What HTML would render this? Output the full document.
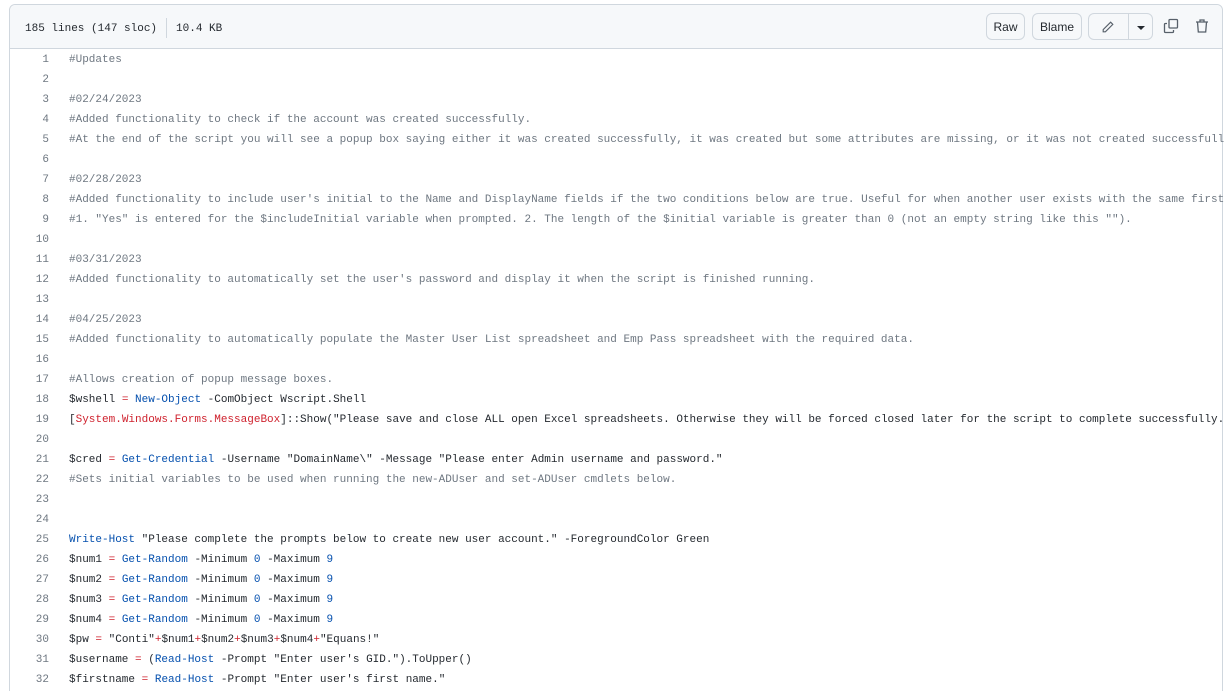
<!DOCTYPE html>
<html style="height:691px;overflow:hidden"><head><meta charset="utf-8"><style>
body{margin:0;background:#fff;width:1232px;height:691px;overflow:hidden;position:relative;font-family:"Liberation Sans",sans-serif;}
.box{position:absolute;left:9px;top:4px;width:1212px;height:700px;border:1px solid #d0d7de;border-radius:6px;}
.hdr{height:43px;background:#f6f8fa;border-bottom:1px solid #d0d7de;border-radius:6px 6px 0 0;position:relative;}
.info{position:absolute;left:15px;top:13px;font:11px "Liberation Mono",monospace;color:#24292f;}
.sep{display:inline-block;width:1px;height:20px;background:#d0d7de;vertical-align:middle;margin:0 9px;}
.btn{position:absolute;top:8px;height:27px;border:1px solid #d0d7de;border-radius:6px;background:#f6f8fa;font-size:12px;color:#24292f;line-height:27px;text-align:center;box-sizing:border-box;}
.code{position:absolute;left:0;top:50px;font:11px "Liberation Mono",monospace;color:#24292f;}
.l{height:20px;line-height:20px;white-space:pre;position:relative;}
.n{position:absolute;left:0;width:49px;text-align:right;color:#6e7781;}
.t{position:absolute;left:69px;}
.c{color:#6e7781}.f{color:#0550ae}.o{color:#cf222e}
</style></head><body>
<div class="box"><div class="hdr">
<div class="info">185 lines (147 sloc)<span class="sep"></span>10.4 KB</div>
<div class="btn" style="left:976px;width:39px">Raw</div>
<div class="btn" style="left:1022px;width:50px">Blame</div>
<div class="btn" style="left:1078px;width:65px"><svg style="position:absolute;left:12px;top:6px" width="14" height="14" viewBox="0 0 16 16" fill="none" stroke="#57606a" stroke-width="1.3"><path d="M11 2.5l2.5 2.5L5 13.5H2.5V11z"/></svg><span style="position:absolute;left:39px;top:0;width:1px;height:25px;background:#d0d7de"></span><span style="position:absolute;left:48px;top:12px;border:4px solid transparent;border-top:4px solid #24292f;border-bottom:0"></span></div>
<svg style="position:absolute;left:1153px;top:13px" width="16" height="16" viewBox="0 0 16 16" fill="none" stroke="#57606a" stroke-width="1.3"><rect x="6" y="1.5" width="8.5" height="8.5" rx="1"/><path d="M4 5.5H2.5a1 1 0 0 0-1 1v7a1 1 0 0 0 1 1h7a1 1 0 0 0 1-1V12"/></svg>
<svg style="position:absolute;left:1184px;top:13px" width="16" height="16" viewBox="0 0 16 16" fill="none" stroke="#57606a" stroke-width="1.3"><path d="M2 4h12M6 4V2h4v2M3.5 4l.8 10h7.4l.8-10"/></svg>
</div></div>
<div class="code">
<div class="l"><span class="n">1</span><span class="t c">#Updates</span></div>
<div class="l"><span class="n">2</span></div>
<div class="l"><span class="n">3</span><span class="t c">#02/24/2023</span></div>
<div class="l"><span class="n">4</span><span class="t c">#Added functionality to check if the account was created successfully.</span></div>
<div class="l"><span class="n">5</span><span class="t c">#At the end of the script you will see a popup box saying either it was created successfully, it was created but some attributes are missing, or it was not created successfull</span></div>
<div class="l"><span class="n">6</span></div>
<div class="l"><span class="n">7</span><span class="t c">#02/28/2023</span></div>
<div class="l"><span class="n">8</span><span class="t c">#Added functionality to include user's initial to the Name and DisplayName fields if the two conditions below are true. Useful for when another user exists with the same first</span></div>
<div class="l"><span class="n">9</span><span class="t c">#1. "Yes" is entered for the $includeInitial variable when prompted. 2. The length of the $initial variable is greater than 0 (not an empty string like this "").</span></div>
<div class="l"><span class="n">10</span></div>
<div class="l"><span class="n">11</span><span class="t c">#03/31/2023</span></div>
<div class="l"><span class="n">12</span><span class="t c">#Added functionality to automatically set the user's password and display it when the script is finished running.</span></div>
<div class="l"><span class="n">13</span></div>
<div class="l"><span class="n">14</span><span class="t c">#04/25/2023</span></div>
<div class="l"><span class="n">15</span><span class="t c">#Added functionality to automatically populate the Master User List spreadsheet and Emp Pass spreadsheet with the required data.</span></div>
<div class="l"><span class="n">16</span></div>
<div class="l"><span class="n">17</span><span class="t c">#Allows creation of popup message boxes.</span></div>
<div class="l"><span class="n">18</span><span class="t">$wshell <span class="o">=</span> <span class="f">New-Object</span> -ComObject Wscript.Shell</span></div>
<div class="l"><span class="n">19</span><span class="t">[<span class="o">System.Windows.Forms.MessageBox</span>]::Show("Please save and close ALL open Excel spreadsheets. Otherwise they will be forced closed later for the script to complete successfully.</span></div>
<div class="l"><span class="n">20</span></div>
<div class="l"><span class="n">21</span><span class="t">$cred <span class="o">=</span> <span class="f">Get-Credential</span> -Username "DomainName\" -Message "Please enter Admin username and password."</span></div>
<div class="l"><span class="n">22</span><span class="t c">#Sets initial variables to be used when running the new-ADUser and set-ADUser cmdlets below.</span></div>
<div class="l"><span class="n">23</span></div>
<div class="l"><span class="n">24</span></div>
<div class="l"><span class="n">25</span><span class="t"><span class="f">Write-Host</span> "Please complete the prompts below to create new user account." -ForegroundColor Green</span></div>
<div class="l"><span class="n">26</span><span class="t">$num1 <span class="o">=</span> <span class="f">Get-Random</span> -Minimum <span class="f">0</span> -Maximum <span class="f">9</span></span></div>
<div class="l"><span class="n">27</span><span class="t">$num2 <span class="o">=</span> <span class="f">Get-Random</span> -Minimum <span class="f">0</span> -Maximum <span class="f">9</span></span></div>
<div class="l"><span class="n">28</span><span class="t">$num3 <span class="o">=</span> <span class="f">Get-Random</span> -Minimum <span class="f">0</span> -Maximum <span class="f">9</span></span></div>
<div class="l"><span class="n">29</span><span class="t">$num4 <span class="o">=</span> <span class="f">Get-Random</span> -Minimum <span class="f">0</span> -Maximum <span class="f">9</span></span></div>
<div class="l"><span class="n">30</span><span class="t">$pw <span class="o">=</span> "Conti"<span class="o">+</span>$num1<span class="o">+</span>$num2<span class="o">+</span>$num3<span class="o">+</span>$num4<span class="o">+</span>"Equans!"</span></div>
<div class="l"><span class="n">31</span><span class="t">$username <span class="o">=</span> (<span class="f">Read-Host</span> -Prompt "Enter user's GID.").ToUpper()</span></div>
<div class="l"><span class="n">32</span><span class="t">$firstname <span class="o">=</span> <span class="f">Read-Host</span> -Prompt "Enter user's first name."</span></div>
</div>
</body></html>
